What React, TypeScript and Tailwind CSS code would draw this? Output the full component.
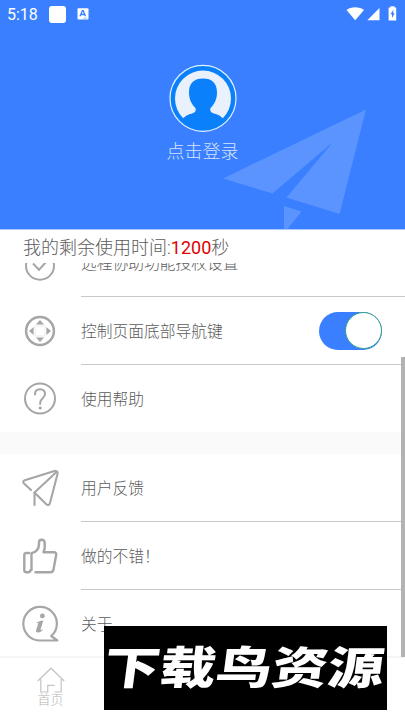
import React from "react";

const PersonAvatar: React.FC = () => (
  <svg width="68" height="68" viewBox="0 0 68 68">
    <circle cx="34" cy="34.3" r="33" fill="#0b80fb" stroke="#e4f1ff" strokeWidth="1.2" />
    <circle cx="34" cy="34.5" r="28" fill="#e9f1fd" />
    <path
      d="M34 14.5C25 14.5 20 19 20 28.5C20 36 23 40.5 26.5 44C27.5 48.5 25 49 21 50C18.5 50.7 16.5 52 14.5 54L11 54C16 62 25 65.5 34 65.5S52 62 57 54L53.5 54C51.5 52 49.5 50.7 47 50C43 49 40.5 48.5 41.5 44C45 40.5 48 36 48 28.5C48 19 43 14.5 34 14.5Z"
      fill="#0b80fb"
    />
  </svg>
);

const StatusBar: React.FC = () => (
  <div className="flex h-7 items-center pl-[7px] pr-[8px]">
    <span className="w-[42px] pt-px font-['Roboto'] text-[16px] leading-none text-white">5:18</span>
    <span className="size-[17px] rounded-[3px] bg-white" />
    <svg className="ml-[11px]" width="12" height="12" viewBox="0 0 12 12">
      <rect x="0.5" y="0.2" width="11" height="11.4" rx="1" fill="#fff" />
      <path d="M3 8.3L5.4 2.7H6.2L8.5 8.3M4 6.5H7.5" stroke="#397fff" strokeWidth="1.3" fill="none" />
      <path d="M6.3 10.2H10" stroke="#9fc0ff" />
    </svg>
    <svg className="ml-auto" width="51" height="16" viewBox="0 0 51 16" fill="#fff">
      <path d="M0.5 4C5 .2 13.5 .2 18 4L9.2 14.3Z" />
      <path d="M33.5 2V14.3H21.3Z" />
      <path d="M44.5 0.2H48.5V1.5H50.2V14.4H42.6V1.5H44.5Z" />
      <path d="M47.4 3.8L44.4 8.2H46V12L48.7 7.3H47.2Z" fill="#397fff" />
    </svg>
  </div>
);

const Header: React.FC = () => (
  <header className="relative h-[230px] shrink-0 border-b border-[#a8c8ff] bg-[#397fff]">
    <svg className="absolute inset-0" width="405" height="229" viewBox="0 0 405 229" fill="#5b94ff">
      <path d="M366 109.5L223 178.5L272.5 193.5L332.5 142.5L286.5 197.5L339.5 214Z" />
      <path d="M284 206L301.5 211.5L287.5 229H284Z" />
    </svg>
    <div className="relative">
      <StatusBar />
      <div className="flex flex-col items-center pt-[36px]">
        <PersonAvatar />
        <span className="mt-[7px] text-[18px] font-light leading-[26px] text-[#d5e4ff]">点击登录</span>
      </div>
    </div>
  </header>
);

const CheckIcon: React.FC = () => (
  <svg width="36" height="36" viewBox="0 0 36 36" fill="none" stroke="#a6a6a6" strokeWidth="2">
    <circle cx="18" cy="20.7" r="14" />
    <path d="M11 18.5L17 24.7L25.5 15.5" />
  </svg>
);

const DirectionIcon: React.FC = () => (
  <svg width="36" height="36" viewBox="0 0 36 36">
    <circle cx="18" cy="18" r="13.9" fill="none" stroke="#a6a6a6" strokeWidth="2.5" />
    <path
      d="M18 7L22 11.6H14ZM18 29L22 24.4H14ZM7 18L11.6 14V22ZM29 18L24.4 14V22Z"
      fill="#a6a6a6"
    />
    <rect x="13" y="13" width="10" height="10" fill="none" stroke="#ececec" />
  </svg>
);

const HelpIcon: React.FC = () => (
  <svg width="36" height="36" viewBox="0 0 36 36" fill="none" stroke="#a6a6a6" strokeWidth="2">
    <circle cx="18" cy="17.5" r="15" />
    <path d="M13 13.5C13 10 15 8.3 18 8.3S23 10.3 23 13.3C23 16.9 18.2 17.5 18.2 21.5V23.1" strokeLinecap="round" />
    <circle cx="18.2" cy="27" r="1.6" fill="#a6a6a6" stroke="none" />
  </svg>
);

const PlaneIcon: React.FC = () => (
  <svg
    width="38"
    height="38"
    viewBox="0 0 38 38"
    fill="none"
    stroke="#a6a6a6"
    strokeWidth="2.1"
    strokeLinecap="round"
    strokeLinejoin="round"
  >
    <path d="M10 21L3 14.5C1.8 13.3 2.2 11.7 3.8 11.2L33.5 2.1C35.5 1.6 37 3 36.5 5L29 34C28.5 36 26.8 36.7 25.3 35.2L13.5 23.5V36" />
    <path d="M13.5 23.5L35.5 3" />
  </svg>
);

const ThumbIcon: React.FC = () => (
  <svg
    width="36"
    height="36"
    viewBox="0 0 36 36"
    fill="none"
    stroke="#a6a6a6"
    strokeWidth="2.4"
    strokeLinecap="round"
    strokeLinejoin="round"
  >
    <path d="M7 15H4.2C3 15 2.3 15.7 2.3 17V32.3C2.3 33.5 3 34.2 4.2 34.2H6.3C7.5 34.2 8.3 33.5 8.3 32.3" />
    <path d="M9.5 32V15.2C13.8 14.3 17 11.8 17 5.8V4.5C17 2.6 18 1.7 19.6 1.7C21.7 1.7 22.7 3.2 22.7 5.3V9.5C22.7 11 22 13 21.5 14.3H32C33.7 14.3 34.5 15.2 34.2 16.8L31.5 31.5C31.2 33.2 30.2 34.2 28.4 34.2H13.5" />
  </svg>
);

const InfoIcon: React.FC = () => (
  <svg width="38" height="38" viewBox="0 0 38 38">
    <path
      d="M19.2 35.5H36.4L30.2 31C33.9 28 35.9 23.5 35.9 18.5A16.8 16.8 0 1 0 19.2 35.5Z"
      fill="none"
      stroke="#a6a6a6"
      strokeWidth="2.2"
      strokeLinejoin="round"
    />
    <circle cx="21.4" cy="10.9" r="2.4" fill="#a6a6a6" />
    <path
      d="M15.5 17.6C17.3 16.7 19.7 15.8 22.3 15.5L19.6 24.4C19.3 25.4 20 25.5 22.4 23.7C21.2 26 19.2 27.5 16.9 27.5C14.9 27.5 14.6 26.2 15.3 24.4L17.2 18.8C17.4 17.9 17 17.7 15.5 18.1Z"
      fill="#a6a6a6"
    />
  </svg>
);

const Toggle: React.FC = () => (
  <button className="mr-[23px] flex h-[38px] w-[63px] items-center justify-end rounded-full bg-[#397fff]">
    <span className="size-[37px] rounded-full border-[1.5px] border-[#2f9f87] bg-white" />
  </button>
);

interface MenuRowProps {
  icon: React.ReactNode;
  label: string;
  last?: boolean;
  children?: React.ReactNode;
}

const MenuRow: React.FC<MenuRowProps> = ({ icon, label, last, children }) => (
  <div className="flex h-[68px] shrink-0">
    <div className="flex w-[81px] shrink-0 items-center justify-center pb-px pr-px">{icon}</div>
    <div
      className={
        last
          ? "flex flex-1 items-center justify-between pb-px"
          : "flex flex-1 items-center justify-between border-b border-[#c8c8c8]"
      }
    >
      <span className="pt-[2px] text-[15.75px] font-light leading-6 text-[#5c5c5c]">{label}</span>
      {children}
    </div>
  </div>
);

const HomeTab: React.FC = () => (
  <div className="flex w-[101px] flex-col items-center pt-[9px]">
    <svg width="28" height="26" viewBox="0 0 28 26" fill="none" stroke="#c3c3c3" strokeWidth="1.2">
      <path d="M0.8 14L14 1.2L27.2 14" />
      <path d="M3.8 12V25H10.8V18.3H17.5M17.5 25H24.2V12" />
    </svg>
    <span className="-mt-px text-[13px] font-light leading-[15px] text-[#b5b5b5]">首页</span>
  </div>
);

const App: React.FC = () => {
  return (
    <div className="relative flex h-[720px] w-[405px] flex-col overflow-hidden bg-white font-['Roboto','Noto_Sans_CJK_SC',sans-serif]">
      <Header />
      <div className="h-[33px] shrink-0 pl-[23px] text-[18px] font-light leading-[35px] text-[#5c5c5c]">
        我的剩余使用时间:<span className="font-normal text-[#e00000]">1200</span>秒
      </div>

      <main className="flex h-[394px] shrink-0 overflow-hidden">
        <div className="-mt-[34px] flex w-full flex-col">
          <MenuRow icon={<CheckIcon />} label="远程协助功能授权设置" />
          <MenuRow icon={<DirectionIcon />} label="控制页面底部导航键">
            <Toggle />
          </MenuRow>
          <MenuRow icon={<HelpIcon />} label="使用帮助" last />
          <div className="-mt-px h-[22px] shrink-0 bg-[#fafafa]" />
          <MenuRow icon={<PlaneIcon />} label="用户反馈" />
          <MenuRow icon={<ThumbIcon />} label="做的不错！" />
          <MenuRow icon={<InfoIcon />} label="关于" last />
        </div>
      </main>
      {/* scroll indicator */}
      <div className="absolute right-0 top-[357px] h-[300px] w-[4.5px] bg-[#b2b2b2]" />

      <nav className="-mt-px flex h-[64px] shrink-0 border-t-2 border-[#f5f5f5] bg-white">
        <HomeTab />
      </nav>

      <div className="absolute left-[104px] top-[626px] flex h-[84px] w-[283px] items-center justify-center bg-black pr-[3px] pt-[2px]">
        <span className="-skew-x-6 scale-y-[0.8] whitespace-nowrap text-[56px] font-black leading-none text-white">
          下载鸟资源
        </span>
      </div>
    </div>
  );
};

export default App;
